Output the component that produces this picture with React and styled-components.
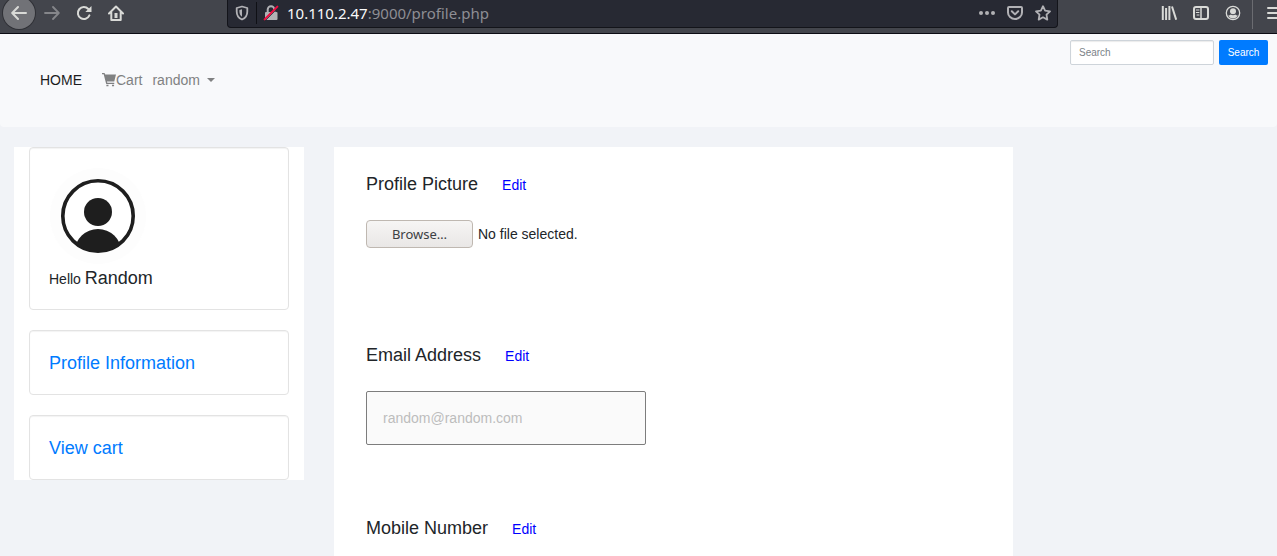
import React from "react";
import styled, { createGlobalStyle } from "styled-components";

const GlobalStyle = createGlobalStyle`
  *, *::before, *::after { box-sizing: border-box; }
  body {
    margin: 0;
    background: #f1f3f7;
    color: #212529;
    font-family: "Liberation Sans", Arial, sans-serif;
    font-size: 14px;
    line-height: 20px;
  }
  button, input { font-family: inherit; }
`;

const Window = styled.div`
  display: flex;
  flex-direction: column;
  height: 100vh;
  overflow: hidden;
`;

/* Browser toolbar */
const Toolbar = styled.header`
  display: flex;
  flex: none;
  align-items: center;
  height: 34px;
  padding: 0 0 7px 3px;
  overflow: hidden;
  background: #43454c;
  border-bottom: 1px solid #0c0c14;
`;

const ToolGroup = styled.div`
  display: flex;
  flex: none;
  align-items: center;
  width: ${(p) => p.$width};
`;

const ToolButton = styled.button`
  display: flex;
  flex: none;
  align-items: center;
  justify-content: center;
  width: ${(p) => (p.$compact ? "28px" : "32px")};
  height: ${(p) => (p.$compact ? "28px" : "32px")};
  margin-right: ${(p) => (p.$round ? "1px" : "0")};
  padding: 0;
  border: 0;
  border-radius: 50%;
  background: ${(p) => (p.$round ? "#717277" : "none")};
  box-shadow: ${(p) => (p.$round ? "0 0 0 1px #2f3036" : "none")};
  color: ${(p) => p.$color || "#d9dad7"};
`;

const Divider = styled.span`
  flex: none;
  width: 1px;
  height: ${(p) => p.$height};
  margin: ${(p) => p.$margin || "0"};
  background: ${(p) => p.$color};
`;

const AddressBar = styled.div`
  display: flex;
  flex: 1;
  align-items: center;
  align-self: flex-start;
  min-width: 0;
  height: 28px;
  margin: 0 95px 0 95px;
  padding-bottom: 1px;
  background: #272933;
  border: 1px solid #13141a;
  border-top: 0;
  border-radius: 0 0 4px 4px;
`;

const Address = styled.div`
  flex: 1;
  min-width: 0;
  padding-left: 2px;
  overflow: hidden;
  white-space: nowrap;
  color: #8e8e94;
  font-family: "Noto Sans", sans-serif;
  font-size: 15px;
`;

const Host = styled.span`
  color: #f9f9fa;
`;

/* Site navigation */
const Navbar = styled.nav`
  display: flex;
  flex: none;
  justify-content: space-between;
  height: 93px;
  padding: 6px 9px 8px 40px;
  background: #f8f9fb;
  border-radius: 0 0 4px 4px;
`;

const NavLinks = styled.div`
  display: flex;
  align-items: center;
`;

const NavLink = styled.a`
  display: flex;
  align-items: center;
  margin-right: ${(p) => (p.$active ? "20px" : "10px")};
  color: ${(p) => (p.$active ? "#1b1c1d" : "#808182")};
  text-decoration: none;
`;

const Caret = styled.span`
  margin-left: 7px;
  border: 4px solid transparent;
  border-top-color: currentColor;
  border-bottom: 0;
`;

const SearchForm = styled.form`
  display: flex;
  gap: 5px;
  height: 25px;
`;

const SearchInput = styled.input`
  width: 144px;
  padding: 0 8px;
  border: 1px solid #ced4da;
  border-radius: 2px;
  background: #fff;
  box-shadow: inset 0 1px 1px rgba(0, 0, 0, 0.08);
  font-size: 10px;
  &::placeholder { color: #7b8288; }
`;

const SearchButton = styled.button`
  width: 49px;
  padding: 0;
  border: 0;
  border-radius: 2px;
  background: #007bff;
  color: #fff;
  font-size: 10px;
`;

/* Page content */
const Content = styled.div`
  display: grid;
  flex: 1;
  grid-template-columns: 290fr 679fr 234fr;
  gap: 30px;
  min-height: 0;
  padding: 20px 0 0 14px;
`;

const Sidebar = styled.aside`
  display: flex;
  flex-direction: column;
  align-self: start;
  gap: 20px;
  padding: 0 15px;
  background: #fff;
`;

const Card = styled.section`
  padding: 19px 19px 17px;
  border: 1px solid #e3e3e3;
  border-radius: 4px;
  box-shadow: inset 0 1px 1px rgba(0, 0, 0, 0.05);
  font-size: 18px;
  line-height: 27px;
`;

const Avatar = styled.svg`
  display: block;
  width: 98px;
  height: 98px;
`;

const Greeting = styled.span`
  font-size: 14px;
  line-height: 20px;
`;

const CardLink = styled.a`
  color: #007bff;
  text-decoration: none;
`;

const Panel = styled.main`
  display: flex;
  flex-direction: column;
  gap: 69px;
  padding: 23px 32px 0;
  background: #fff;
`;

const Field = styled.section`
  display: flex;
  flex: none;
  flex-direction: column;
  gap: 22px;
`;

const FieldHeader = styled.div`
  display: flex;
  align-items: baseline;
  gap: 24px;
  height: 28px;
  line-height: 28px;
`;

const FieldTitle = styled.h2`
  margin: 0;
  font-size: 18px;
  font-weight: 400;
`;

const EditLink = styled.a`
  color: #0000ff;
  text-decoration: none;
`;

const FilePicker = styled.div`
  display: flex;
  gap: 5px;
  height: 52px;
  line-height: 28px;
`;

const HiddenFile = styled.input`
  position: absolute;
  width: 1px;
  height: 1px;
  opacity: 0;
`;

const BrowseLabel = styled.label`
  width: 107px;
  height: 28px;
  border: 1px solid #bfb8b1;
  border-radius: 4px;
  background: linear-gradient(#f6f5f4, #e9e7e6);
  color: #3c4043;
  font-family: "Noto Sans", sans-serif;
  font-size: 13px;
  line-height: 26px;
  text-align: center;
`;

const TextInput = styled.input`
  width: 280px;
  max-width: 100%;
  height: 54px;
  padding: 0 16px;
  border: 1px solid #7d7d7d;
  border-radius: 2px;
  background: #fafafa;
  font-size: 14px;
  &:disabled { color: #bdbdbd; }
`;

const Icon = ({ children, size = 16, width = 2 }) => (
  <svg width={size} height={size} viewBox="0 0 16 16" fill="none" stroke="currentColor"
    strokeWidth={width} strokeLinecap="round" strokeLinejoin="round" aria-hidden="true">
    {children}
  </svg>
);

const ShieldIcon = () => (
  <Icon width={1.8}>
    <path d="M8 1.5 13.3 3v3.5c0 4-2 6.7-5.3 8-3.3-1.3-5.3-4-5.3-8V3Z" />
    <path d="M8 4.3v7.4C6.2 10.5 5.4 8.8 5.4 6.5V5Z" fill="currentColor" stroke="none" />
  </Icon>
);

const InsecureIcon = () => (
  <Icon>
    <path d="M4.7 7V4.6a3.3 3.3 0 0 1 6.6 0V7" />
    <rect x="2" y="7" width="12.5" height="8" rx="1" fill="currentColor" stroke="none" />
    <path d="M2.6 15.2 15.2 2.6" stroke="#272933" strokeWidth="1" />
    <path d="M1.6 14.4 14.4 1.6" stroke="#f10a3f" />
  </Icon>
);

const BackIcon = () => <Icon><path d="M15 8H1.5M7 2 1.2 8 7 14" /></Icon>;
const ForwardIcon = () => <Icon width={1.8}><path d="M1 8h13.5M9 2l5.8 6L9 14" /></Icon>;
const ReloadIcon = () => (
  <Icon>
    <path d="M13.4 10.4A6 6 0 1 1 12.3 4" />
    <path d="M15.5 1v6H9.3Z" fill="currentColor" stroke="none" />
  </Icon>
);
const HomeIcon = () => (
  <Icon>
    <path d="m1 8.5 7-7 7 7M3.3 7.5V15h9.4V7.5" />
    <path d="M6.5 8h3v5h-3z" fill="currentColor" stroke="none" />
  </Icon>
);
const MoreIcon = () => (
  <Icon>
    <g fill="currentColor" stroke="none">
      <circle cx="2" cy="8" r="2" /><circle cx="8" cy="8" r="2" /><circle cx="14" cy="8" r="2" />
    </g>
  </Icon>
);
const PocketIcon = () => (
  <Icon>
    <path d="M2 2h12a1 1 0 0 1 1 1v4.5a7 6.5 0 0 1-14 0V3a1 1 0 0 1 1-1Z" />
    <path d="M4.8 6.3 8 9.4l3.2-3.1" />
  </Icon>
);
const StarIcon = () => (
  <Icon width={1.8}>
    <path d="m8 1.2 2.1 4.4 4.9.7-3.5 3.4.8 4.9L8 12.3l-4.3 2.3.8-4.9L1 6.3l4.9-.7Z" />
  </Icon>
);
const LibraryIcon = () => (
  <Icon>
    <path d="M1.8 1v14M5.1 3v12M8.4 1v14M11 1.5l4.2 13.2" strokeLinecap="butt" />
  </Icon>
);
const SidebarIcon = () => (
  <Icon>
    <rect x="1" y="2" width="14" height="12" rx="2" />
    <path d="M8 2v12" strokeWidth="1.5" />
    <path d="M3.3 5H6M3.3 7.5H6M4 10h2" strokeWidth="1" />
  </Icon>
);
const AccountIcon = () => (
  <Icon>
    <circle cx="8" cy="8" r="6.7" strokeWidth="1.3" />
    <circle cx="8" cy="6.2" r="3" fill="currentColor" stroke="none" />
    <path d="M3.2 10.5c1 .2 1.7-.4 2.6-.9 1.4.8 3 .8 4.4 0 .9.5 1.6 1.1 2.6.9-1 1.9-2.7 3-4.8 3s-3.8-1.1-4.8-3Z" fill="currentColor" stroke="none" />
  </Icon>
);
const MenuIcon = () => <Icon><path d="M1 3h14M1 8h14M1 13h14" /></Icon>;

const CartIcon = () => (
  <Icon size={14}>
    <path d="M0 0h2.9l.8 1.8H16L14 9.6H5.6l.5 1.6H14v1.5H4.8L1.9 1.4H0Z" fill="currentColor" stroke="none" />
    <path d="M5 13.4h2.4v1.8H5zM11.4 13.4h2.4v1.8h-2.4z" fill="currentColor" stroke="none" />
  </Icon>
);

const FieldHeading = ({ title }) => (
  <FieldHeader>
    <FieldTitle>{title}</FieldTitle>
    <EditLink href="#edit">Edit</EditLink>
  </FieldHeader>
);

export default function App() {
  return (
    <Window>
      <GlobalStyle />
      <Toolbar>
        <ToolGroup $width="129px">
          <ToolButton $round aria-label="Back"><BackIcon /></ToolButton>
          <ToolButton $color="#85868a" aria-label="Forward"><ForwardIcon /></ToolButton>
          <ToolButton aria-label="Reload"><ReloadIcon /></ToolButton>
          <ToolButton aria-label="Home"><HomeIcon /></ToolButton>
        </ToolGroup>
        <AddressBar>
          <ToolButton $compact $color="#b1b1b5" aria-label="Tracking protection"><ShieldIcon /></ToolButton>
          <Divider $height="22px" $color="#0f1015" />
          <ToolButton $compact $color="#b1b1b5" aria-label="Connection"><InsecureIcon /></ToolButton>
          <Address><Host>10.110.2.47</Host>:9000/profile.php</Address>
          <ToolButton $compact $color="#b1b1b5" aria-label="Page actions"><MoreIcon /></ToolButton>
          <ToolButton $compact $color="#b1b1b5" aria-label="Save to Pocket"><PocketIcon /></ToolButton>
          <ToolButton $compact $color="#b1b1b5" aria-label="Bookmark"><StarIcon /></ToolButton>
        </AddressBar>
        <ToolGroup $width="124px">
          <ToolButton aria-label="Library"><LibraryIcon /></ToolButton>
          <ToolButton aria-label="Sidebars"><SidebarIcon /></ToolButton>
          <ToolButton aria-label="Account"><AccountIcon /></ToolButton>
          <Divider $height="32px" $margin="0 6px 0 3px" $color="#6b6c71" />
          <ToolButton aria-label="Menu"><MenuIcon /></ToolButton>
        </ToolGroup>
      </Toolbar>

      <Navbar>
        <NavLinks>
          <NavLink href="#home" $active>HOME</NavLink>
          <NavLink href="#cart"><CartIcon />Cart</NavLink>
          <NavLink href="#account">random<Caret /></NavLink>
        </NavLinks>
        <SearchForm>
          <SearchInput type="search" placeholder="Search" aria-label="Search" />
          <SearchButton type="button">Search</SearchButton>
        </SearchForm>
      </Navbar>

      <Content>
        <Sidebar>
          <Card>
            <Avatar viewBox="0 0 98 98" role="img" aria-label="User avatar">
              <defs>
                <clipPath id="avatar-ring"><circle cx="49" cy="49" r="36" /></clipPath>
              </defs>
              <circle cx="49" cy="49" r="48" fill="#fdfdfd" />
              <circle cx="49" cy="49" r="35.2" fill="#fff" stroke="#1e1e1e" strokeWidth="3.6" />
              <circle cx="49" cy="45" r="14" fill="#1e1e1e" />
              <ellipse cx="49" cy="84" rx="23" ry="22" fill="#1e1e1e" clipPath="url(#avatar-ring)" />
            </Avatar>
            <Greeting>Hello </Greeting>Random
          </Card>
          <Card><CardLink href="#profile">Profile Information</CardLink></Card>
          <Card><CardLink href="#view-cart">View cart</CardLink></Card>
        </Sidebar>

        <Panel>
          <Field>
            <FieldHeading title="Profile Picture" />
            <FilePicker>
              <HiddenFile id="picture" type="file" />
              <BrowseLabel htmlFor="picture">Browse…</BrowseLabel>
              <span>No file selected.</span>
            </FilePicker>
          </Field>
          <Field>
            <FieldHeading title="Email Address" />
            <TextInput type="email" defaultValue="random@random.com" disabled aria-label="Email Address" />
          </Field>
          <Field>
            <FieldHeading title="Mobile Number" />
          </Field>
        </Panel>
      </Content>
    </Window>
  );
}
